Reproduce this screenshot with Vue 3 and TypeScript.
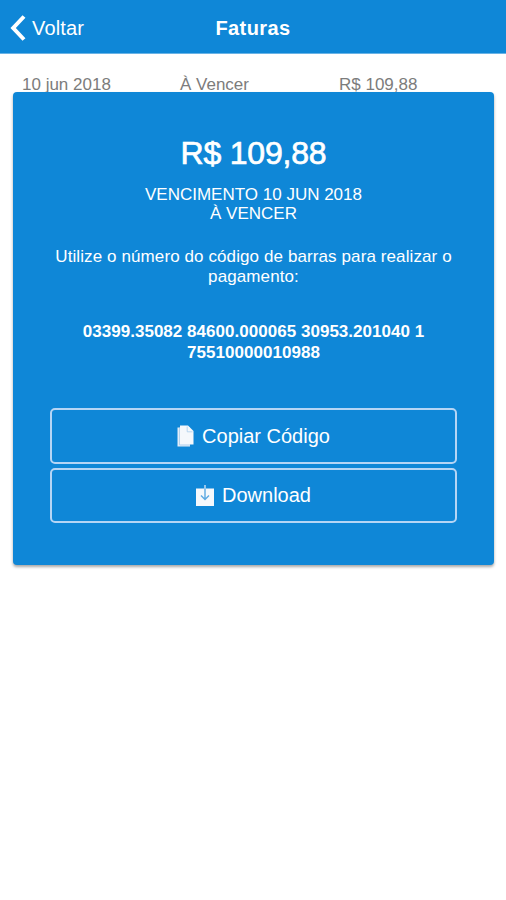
<script setup lang="ts">
interface Invoice {
  date: string
  status: string
  amount: string
  barcode: string[]
}

const invoice: Invoice = {
  date: '10 jun 2018',
  status: 'À Vencer',
  amount: 'R$ 109,88',
  barcode: ['03399.35082 84600.000065 30953.201040 1', '75510000010988'],
}
</script>

<template>
  <div class="screen">
    <header class="navbar">
      <button class="back" type="button">
        <svg class="chevron" viewBox="0 0 16 28" aria-hidden="true">
          <path d="M14 2.5 L3.2 14 L14 25.5" />
        </svg>
        <span>Voltar</span>
      </button>
      <h1 class="title">Faturas</h1>
    </header>

    <main class="content">
      <div class="row">
        <span>{{ invoice.date }}</span>
        <span>{{ invoice.status }}</span>
        <span>{{ invoice.amount }}</span>
      </div>

      <section class="card">
        <h2 class="amount">{{ invoice.amount }}</h2>
        <p class="due">
          Vencimento {{ invoice.date }}<br />{{ invoice.status }}
        </p>
        <p class="hint">
          Utilize o número do código de barras para realizar o<br />pagamento:
        </p>
        <p class="barcode">
          <span v-for="line in invoice.barcode" :key="line">{{ line }}</span>
        </p>
        <div class="actions">
          <button class="action" type="button">
            <svg class="copy-icon" viewBox="0 0 17 22" aria-hidden="true">
              <path class="back-sheet" d="M0.5 2.5 H13 V21.5 H0.5 Z" />
              <path class="sheet" d="M3 0.5 H11 L16.5 6 V19.5 H3 Z" />
              <path class="fold" d="M10.2 1.5 V6.8 H15.5" />
              <path class="edge" d="M2.5 3 V20 H13" />
            </svg>
            <span>Copiar Código</span>
          </button>
          <button class="action" type="button">
            <svg class="download-icon" viewBox="0 0 18 21" aria-hidden="true">
              <rect class="sheet" x="0" y="3.5" width="18" height="17.5" />
              <path class="stem" d="M9 0 V4" />
              <path class="arrow" d="M9 3.5 V14 M5 10.5 L9 14.5 L13 10.5" />
            </svg>
            <span>Download</span>
          </button>
        </div>
      </section>
    </main>
  </div>
</template>

<style>
body {
  margin: 0;
  background: #fff;
}
</style>

<style scoped>
.screen {
  height: 900px;
  overflow: hidden;
  background: #fff;
  font-family: 'Liberation Sans', Arial, sans-serif;
}
.navbar {
  box-sizing: border-box;
  height: 54px;
  padding: 3px 10px 0;
  display: grid;
  grid-template-columns: 1fr auto 1fr;
  align-items: center;
  background: #0f87d7;
  border-bottom: 1px solid #69b3e6;
  color: #fff;
}
button {
  font: inherit;
  color: inherit;
  background: none;
  border: 0;
  padding: 0;
}
.back {
  display: flex;
  align-items: center;
  gap: 6px;
  font-size: 20px;
  line-height: 26px;
  letter-spacing: 0.15px;
}
.chevron {
  width: 16px;
  height: 28px;
  fill: none;
  stroke: #fff;
  stroke-width: 4;
}
.title {
  margin: 0;
  font-size: 20px;
  line-height: 26px;
  letter-spacing: 0.4px;
}
.content {
  position: relative;
}
.row {
  display: grid;
  grid-template-columns: 158px 159px 1fr;
  padding: 21px 22px 0;
  font-size: 17px;
  line-height: 20px;
  color: #7c7c7c;
}
.card {
  position: absolute;
  top: 37.5px;
  left: 13px;
  right: 12px;
  box-sizing: border-box;
  height: 473px;
  padding: 42.5px 37px 0;
  border-radius: 4px;
  background: #0f87d7;
  box-shadow: 0 2px 3px rgba(0, 0, 0, 0.35);
  color: #fff;
  text-align: center;
  font-size: 17px;
  line-height: 19px;
}
.amount {
  margin: 0;
  font-size: 32px;
  line-height: 38px;
  font-weight: 400;
  letter-spacing: -0.2px;
  -webkit-text-stroke: 0.7px #fff;
}
.due {
  margin: 13px 0 0;
  text-transform: uppercase;
}
.hint {
  margin: 24px 0 0;
  line-height: 20px;
  letter-spacing: 0.1px;
  white-space: nowrap;
}
.barcode {
  margin: 34px 0 0;
  display: flex;
  flex-direction: column;
  font-weight: 700;
  line-height: 21px;
  letter-spacing: 0.03px;
}
.actions {
  margin-top: 45px;
  display: grid;
  gap: 4px;
}
.action {
  box-sizing: border-box;
  height: 55.5px;
  border: 2px solid #b5d5f5;
  border-radius: 5px;
  display: flex;
  align-items: center;
  justify-content: center;
  gap: 8px;
  font-size: 20px;
  line-height: 24px;
}
.copy-icon {
  width: 17px;
  height: 22px;
}
.download-icon {
  width: 18px;
  height: 21px;
}
.sheet {
  fill: #f5f8fc;
}
.back-sheet {
  fill: #e3edf8;
}
.edge,
.fold {
  fill: none;
  stroke: #a9cdec;
  stroke-width: 0.8;
}
.stem,
.arrow {
  fill: none;
  stroke-width: 1.4;
}
.stem {
  stroke: #cfe2f5;
}
.arrow {
  stroke: #5ca9e2;
}
</style>
